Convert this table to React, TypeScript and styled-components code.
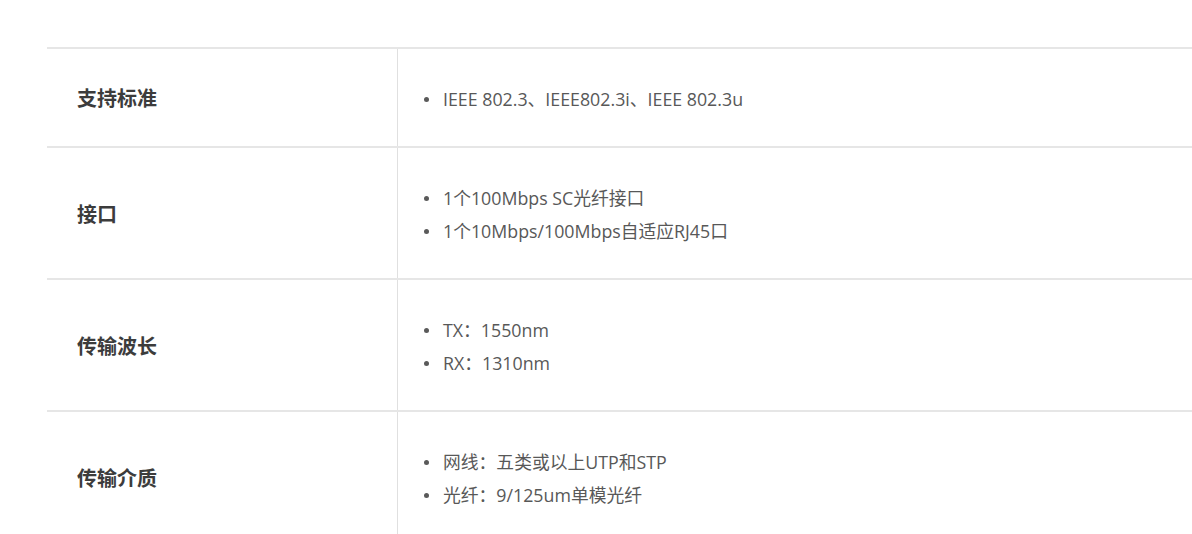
import React from 'react';
import styled, { createGlobalStyle } from 'styled-components';

const GlobalStyle = createGlobalStyle`
  html, body {
    margin: 0;
    padding: 0;
    background: #fff;
    overflow: hidden;
  }
  body {
    font-family: "Open Sans", "Noto Sans CJK SC", sans-serif;
  }
`;

const Page = styled.div`
  padding: 47px 0 0 47px;
`;

const SpecTable = styled.table`
  width: 100%;
  table-layout: fixed;
  border-collapse: collapse;
  border-top: 2px solid #e6e6e6;
`;

const Row = styled.tr`
  border-bottom: 2px solid #e6e6e6;
`;

const Label = styled.th`
  width: 320px;
  padding: 0 0 0 30px;
  text-align: left;
  font-family: "Noto Sans CJK SC", sans-serif;
  font-size: 20px;
  font-weight: 700;
  color: #3c3c3c;
  border-right: 1px solid #e0e0e0;
  vertical-align: middle;
`;

const Value = styled.td`
  padding: 32px 0 32px 26px;
  vertical-align: middle;
`;

const List = styled.ul`
  margin: 0;
  padding: 0;
  list-style: none;
`;

const Item = styled.li`
  display: flex;
  align-items: center;
  gap: 14px;
  height: 33px;
  font-size: 17.8px;
  color: #585858;

  &::before {
    content: '';
    width: 5px;
    height: 5px;
    margin-top: 4px;
    border-radius: 50%;
    background: #5a5a5a;
    flex: none;
  }
`;

const specs: { label: string; items: string[] }[] = [
  { label: '支持标准', items: ['IEEE 802.3、IEEE802.3i、IEEE 802.3u'] },
  { label: '接口', items: ['1个100Mbps SC光纤接口', '1个10Mbps/100Mbps自适应RJ45口'] },
  { label: '传输波长', items: ['TX：1550nm', 'RX：1310nm'] },
  { label: '传输介质', items: ['网线：五类或以上UTP和STP', '光纤：9/125um单模光纤'] },
];

const App: React.FC = () => {
  return (
    <>
      <GlobalStyle />
      <Page>
        <SpecTable>
          <tbody>
            {specs.map((spec) => (
              <Row key={spec.label}>
                <Label>{spec.label}</Label>
                <Value>
                  <List>
                    {spec.items.map((item) => (
                      <Item key={item}>{item}</Item>
                    ))}
                  </List>
                </Value>
              </Row>
            ))}
          </tbody>
        </SpecTable>
      </Page>
    </>
  );
};

export default App;
